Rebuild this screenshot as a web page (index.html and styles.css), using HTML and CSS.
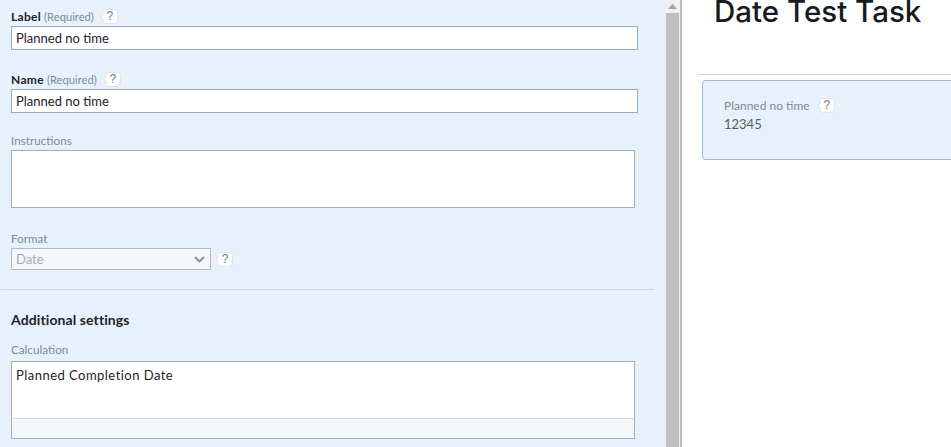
FILE: index.html
```html
<!DOCTYPE html>
<html>
<head>
    <title>Date Test Task</title>
    <meta charset="UTF-8">
    <link rel="stylesheet" href="styles.css">
</head>
<body>
    <div class="editor">
        <div class="editor-body">
            <div class="field field-label">
                <div class="field-title"><strong>Label</strong> <span class="required">(Required)</span> <span class="help">?</span></div>
                <div class="text-input">Planned no time</div>
            </div>
            <div class="field field-name">
                <div class="field-title"><strong>Name</strong> <span class="required">(Required)</span> <span class="help">?</span></div>
                <div class="text-input">Planned no time</div>
            </div>
            <div class="field field-instructions">
                <div class="field-title muted">Instructions</div>
                <div class="text-area"></div>
            </div>
            <div class="field field-format">
                <div class="field-title muted">Format</div>
                <div class="select-row">
                    <div class="select">
                        <span>Date</span>
                        <svg width="11" height="7" viewBox="0 0 11 7"><path d="M1 1l4.500 4.500L10 1" fill="none" stroke="#8c9296" stroke-width="2"/></svg>
                    </div>
                    <span class="help">?</span>
                </div>
            </div>
            <div class="divider"></div>
            <h3>Additional settings</h3>
            <div class="field">
                <div class="field-title muted">Calculation</div>
                <div class="calc">
                    <div class="calc-text">Planned Completion Date</div>
                    <div class="calc-footer"></div>
                </div>
            </div>
        </div>
        <div class="scrollbar">
            <div class="scroll-up"><svg width="9" height="5" viewBox="0 0 9 5"><path d="M4.500 0L9 5H0z" fill="#a3a3a3"/></svg></div>
            <div class="scroll-thumb"></div>
        </div>
    </div>
    <div class="preview">
        <h1>Date Test Task</h1>
        <div class="preview-rule"></div>
        <div class="card">
            <div class="card-title">Planned no time <span class="help">?</span></div>
            <div class="card-value">12345</div>
        </div>
    </div>
</body>
</html>
```

FILE: styles.css
```css
* {
    box-sizing: border-box;
}
html, body {
    height: 100%;
}
body {
    margin: 0;
    display: flex;
    overflow: hidden;
    background: white;
    color: #1d2329;
    font-family: Lato, "Liberation Sans", sans-serif;
    font-size: 12px;
}
.editor {
    width: 682px;
    flex: none;
    display: flex;
    background: #e7f1fb;
    border-right: 2px solid #b4bfca;
}
.editor-body {
    width: 665px;
    padding: 9px 11px 0 1px;
}
.field {
    padding-left: 10px;
}
.field-name {
    margin-top: 22px;
}
.field-instructions {
    margin-top: 20px;
}
.field-format {
    margin-top: 23px;
}
.field-title {
    height: 15px;
    line-height: 15px;
    font-size: 12px;
    white-space: nowrap;
}
.field-title strong {
    font-weight: 700;
    letter-spacing: .3px;
}
.muted {
    color: #84898e;
    font-size: 11.7px;
}
.required {
    color: #84898e;
    font-size: 11.2px;
}
.help {
    position: relative;
    display: inline-block;
    width: 16px;
    height: 15px;
    margin-left: 5px;
    background: white;
    border: 1px solid #e0e4e7;
    border-radius: 4px;
    color: #74797d;
    font-family: "Liberation Sans", sans-serif;
    font-size: 12px;
    line-height: 13px;
    text-align: center;
    vertical-align: 1px;
}
/* little point on the left side of the tag */
.help::before {
    content: "";
    position: absolute;
    left: -2px;
    top: 4px;
    width: 4px;
    height: 4px;
    background: white;
    border-left: 1px solid #e0e4e7;
    border-bottom: 1px solid #e0e4e7;
    transform: rotate(45deg);
}
.text-input {
    width: 627px;
    height: 24px;
    margin-top: 2px;
    padding-left: 4px;
    background: white;
    border: 1px solid #9aabb8;
    font-size: 13px;
    line-height: 22px;
}
.text-area {
    width: 624px;
    height: 58px;
    margin-top: 2px;
    background: white;
    border: 1px solid #a4acb2;
}
.select-row {
    display: flex;
    align-items: center;
    margin-top: 2px;
}
.select {
    width: 200px;
    height: 22px;
    display: flex;
    align-items: center;
    justify-content: space-between;
    padding: 0 5px 0 4px;
    background: #f4f8fc;
    border: 1px solid #b5b9bc;
    color: #a5abb0;
    font-size: 13px;
}
.select-row .help {
    margin-left: 6px;
    vertical-align: 0;
}
.divider {
    height: 1px;
    margin-top: 19px;
    background: #cfd8e0;
}
h3 {
    margin: 22px 0 14px 10px;
    font-size: 14px;
    line-height: 16px;
    font-weight: 700;
    letter-spacing: .1px;
}
.calc {
    width: 624px;
    height: 78px;
    margin-top: 4px;
    display: flex;
    flex-direction: column;
    background: white;
    border: 1px solid #a8aeb3;
}
.calc-text {
    flex: 1;
    padding: 4px 4px 0;
    font-size: 13px;
    line-height: 18px;
    letter-spacing: .47px;
}
.calc-footer {
    height: 20px;
    background: #f2f7fc;
    border-top: 1px solid #d4dfe8;
}
.scrollbar {
    width: 15px;
    display: flex;
    flex-direction: column;
    background: #f0f0f0;
}
.scroll-up {
    height: 13px;
    display: flex;
    align-items: center;
    justify-content: center;
}
.scroll-thumb {
    flex: 1;
    margin: 0 1px;
    background: #bfbfbf;
}
.preview {
    flex: 1;
    min-width: 0;
    padding-left: 16px;
}
h1 {
    margin: -12px 0 0 16px;
    height: 86px;
    color: #151b22;
    font-family: Inter, sans-serif;
    font-size: 29.5px;
    line-height: 46px;
    font-weight: 500;
    white-space: nowrap;
}
.preview-rule {
    height: 1px;
    margin-bottom: 5px;
    background: #d3d7da;
}
.card {
    height: 80px;
    margin-left: 4px;
    margin-right: -4px;
    padding: 17px 21px;
    background: #e7f1fb;
    border: 1px solid #a9bacb;
    border-radius: 3px;
}
.card-title {
    color: #85898d;
    font-size: 12px;
    line-height: 16px;
}
.card-title .help {
    margin-left: 6px;
}
.card-value {
    margin-top: 2px;
    color: #585d62;
    font-size: 13px;
    line-height: 16px;
}
```
